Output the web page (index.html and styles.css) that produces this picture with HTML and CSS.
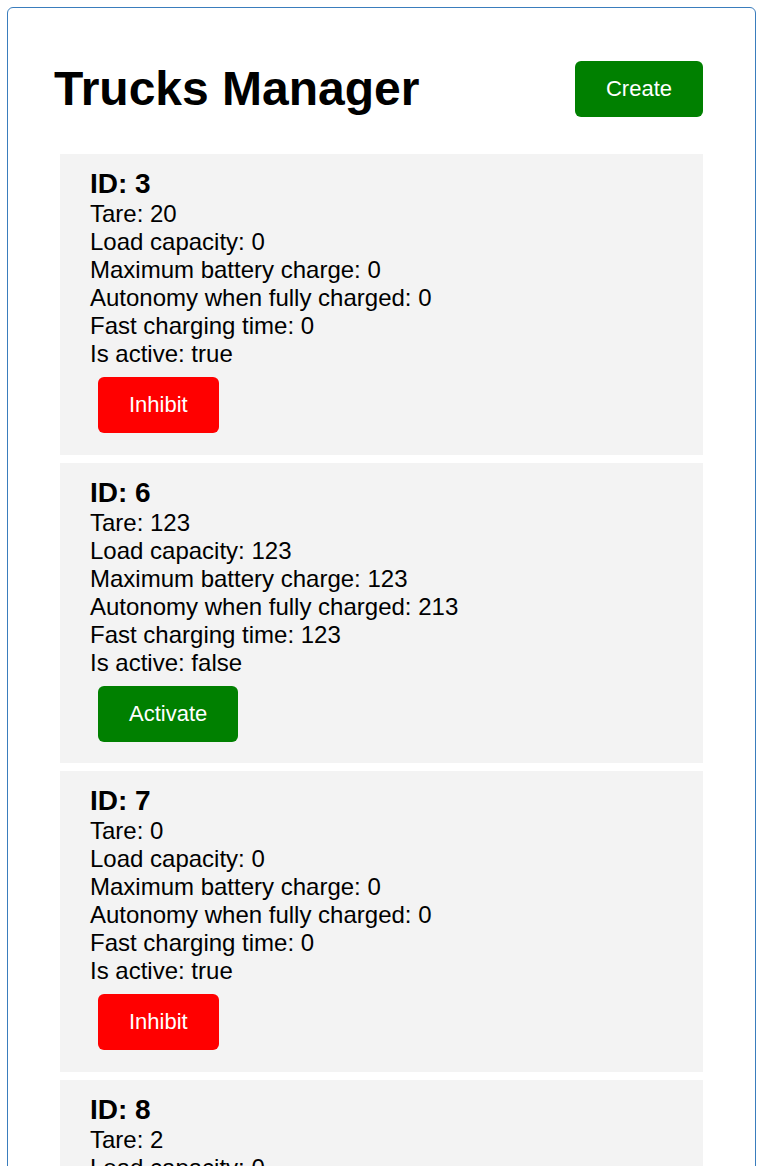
FILE: index.html
```html
<!DOCTYPE html>
<html lang="en">
<head>
<meta charset="utf-8">
<title>Trucks Manager</title>
<link rel="stylesheet" href="styles.css">
</head>
<body>
<div class="app">
  <header class="header">
    <h1 class="title">Trucks Manager</h1>
    <button class="btn btn-green">Create</button>
  </header>
  <div class="list">
    <div class="card">
      <div class="card-id">ID: 3</div>
      <div class="line">Tare: 20</div>
      <div class="line">Load capacity: 0</div>
      <div class="line">Maximum battery charge: 0</div>
      <div class="line">Autonomy when fully charged: 0</div>
      <div class="line">Fast charging time: 0</div>
      <div class="line">Is active: true</div>
      <button class="btn btn-red card-btn">Inhibit</button>
    </div>
    <div class="card">
      <div class="card-id">ID: 6</div>
      <div class="line">Tare: 123</div>
      <div class="line">Load capacity: 123</div>
      <div class="line">Maximum battery charge: 123</div>
      <div class="line">Autonomy when fully charged: 213</div>
      <div class="line">Fast charging time: 123</div>
      <div class="line">Is active: false</div>
      <button class="btn btn-green card-btn">Activate</button>
    </div>
    <div class="card">
      <div class="card-id">ID: 7</div>
      <div class="line">Tare: 0</div>
      <div class="line">Load capacity: 0</div>
      <div class="line">Maximum battery charge: 0</div>
      <div class="line">Autonomy when fully charged: 0</div>
      <div class="line">Fast charging time: 0</div>
      <div class="line">Is active: true</div>
      <button class="btn btn-red card-btn">Inhibit</button>
    </div>
    <div class="card">
      <div class="card-id">ID: 8</div>
      <div class="line">Tare: 2</div>
      <div class="line">Load capacity: 0</div>
      <div class="line">Maximum battery charge: 0</div>
      <div class="line">Autonomy when fully charged: 0</div>
      <div class="line">Fast charging time: 0</div>
      <div class="line">Is active: true</div>
      <button class="btn btn-red card-btn">Inhibit</button>
    </div>
  </div>
</div>
</body>
</html>
```

FILE: styles.css
```css
html, body {
  margin: 0;
  padding: 0;
  background: #ffffff;
}
body {
  padding: 7px 7px 0 7px;
  font-family: "Liberation Sans", Arial, sans-serif;
  color: #000000;
}
.app {
  border: 1px solid #3a7dbd;
  border-radius: 6px;
  padding: 53px 52px 40px 46px;
  min-height: 1300px;
}
.header {
  display: flex;
  justify-content: space-between;
  align-items: center;
}
.title {
  margin: 0;
  font-size: 48px;
  font-weight: bold;
  line-height: 56px;
}
.btn {
  font-family: "Liberation Sans", Arial, sans-serif;
  font-size: 22px;
  line-height: 26px;
  color: #ffffff;
  border: none;
  border-radius: 6px;
  padding: 15px 31px;
  height: 56px;
  cursor: pointer;
}
.btn-green {
  background: #008000;
}
.btn-red {
  background: #ff0000;
}
.list {
  margin: 37px 0 0 6px;
  display: flex;
  flex-direction: column;
  gap: 8px;
}
.card {
  background: #f3f3f3;
  padding: 14px 30px 21.67px;
  display: flex;
  flex-direction: column;
  align-items: flex-start;
}
.card-id {
  font-size: 28px;
  font-weight: bold;
  line-height: 32px;
}
.line {
  font-size: 24px;
  line-height: 28px;
}
.card-btn {
  margin: 9px 0 0 8px;
}
```
